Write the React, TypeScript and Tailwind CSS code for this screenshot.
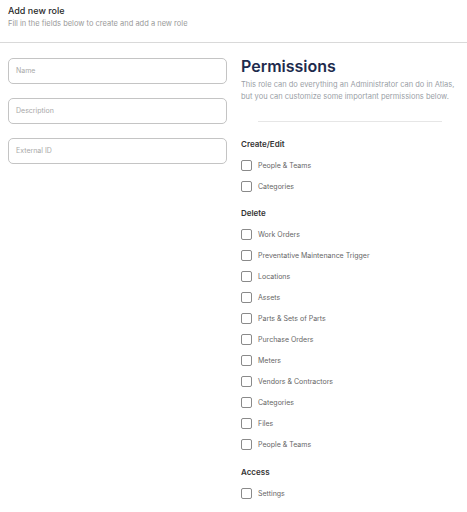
import React from "react";

const font = { fontFamily: "Inter, 'Noto Sans', sans-serif" };

function Check({ label }: { label: string }) {
  return (
    <label className="flex items-center h-[21px] gap-[6px]">
      <span className="w-[11px] h-[11px] border-[1.5px] border-[#8a8a8a] rounded-[2px] bg-white shrink-0" />
      <span className="text-[7px] text-[#666] leading-none">{label}</span>
    </label>
  );
}

function Section({ title, items, extra }: { title: string; items: string[]; extra?: boolean }) {
  return (
    <div className={extra ? "flex flex-col mt-[1px]" : "flex flex-col"}>
      <div className="text-[8px] font-semibold text-[#333] h-[16px] flex items-center">{title}</div>
      <div className="flex flex-col mt-[3px]">
        {items.map((i) => (
          <Check key={i} label={i} />
        ))}
      </div>
    </div>
  );
}

export default function App() {
  return (
    <div className="w-[467px] h-[512px] bg-white overflow-hidden" style={font}>
      <div className="px-[8px] pt-[5px] h-[43px] border-b border-[#d9d9d9]">
        <div className="text-[9px] font-medium text-[#2a2a2a] leading-[12px]">Add new role</div>
        <div className="text-[7.5px] text-[#9a9a9a] leading-[12px] mt-[1px]">Fill in the fields below to create and add a new role</div>
      </div>
      <div className="flex pl-[8px] pt-[15px]">
        <div className="w-[219px] flex flex-col gap-[14px] shrink-0">
          {["Name", "Description", "External ID"].map((p) => (
            <div key={p} className="h-[26px] border border-[#c4c4c4] rounded-[5px] flex items-center px-[7px]">
              <span className="text-[7px] text-[#a8a8a8]">{p}</span>
            </div>
          ))}
        </div>
        <div className="ml-[14px] w-[218px] flex flex-col">
          <div className="text-[16px] font-semibold text-[#1e2b4d] leading-[20px] mt-[-2px]">Permissions</div>
          <div className="text-[7.5px] text-[#9aa0a6] leading-[12px] mt-[3px]">
            This role can do everything an Administrator can do in Atlas,
            <br />
            but you can customize some important permissions below.
          </div>
          <div className="mx-[17px] mt-[18px] border-t border-[#e6e6e6]" />
          <div className="mt-[14px] flex flex-col gap-[8px]">
            <Section title="Create/Edit" items={["People & Teams", "Categories"]} />
            <Section
              title="Delete"
              items={[
                "Work Orders",
                "Preventative Maintenance Trigger",
                "Locations",
                "Assets",
                "Parts & Sets of Parts",
                "Purchase Orders",
                "Meters",
                "Vendors & Contractors",
                "Categories",
                "Files",
                "People & Teams",
              ]}
            />
            <Section title="Access" items={["Settings"]} extra />
          </div>
        </div>
      </div>
    </div>
  );
}
